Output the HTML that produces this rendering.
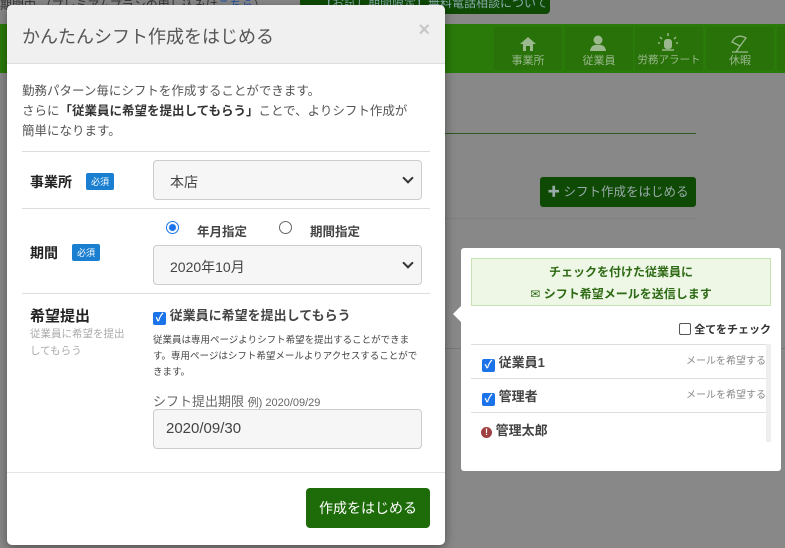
<!DOCTYPE html>
<html><head><meta charset="utf-8"><style>
*{box-sizing:border-box;margin:0;padding:0}
body{width:785px;height:548px;overflow:hidden;background:#888;font-family:"Liberation Sans","Noto Sans CJK JP",sans-serif;position:relative;color:#333}
.abs{position:absolute}
.nav{left:0;top:24px;width:785px;height:49px;background:#2a7a0a}
.ni{top:3px;height:43px;width:68px;background:#287209;color:#9bb88e;font-size:11px;text-align:center;padding-top:25px}
.modal{left:7px;top:5px;width:438px;height:540px;background:#fff;border-radius:5px;overflow:hidden;box-shadow:0 3px 10px rgba(0,0,0,.4)}
.mh{height:59px;background:#f0f0f0;border-bottom:1px solid #ddd;padding:18px 15px;font-size:18px;color:#555}
.x{right:15px;top:14px;font-size:20px;color:#c8c8c8;font-weight:bold}
.desc{left:15px;top:76px;font-size:12.5px;line-height:20px;color:#555;width:420px}
.hr{left:15px;width:408px;height:1px;background:#ddd}
.lab{font-size:14px;font-weight:bold;color:#222}
.req{display:inline-block;background:#1a7fd0;color:#fff;font-size:9px;padding:2px 5px;border-radius:2px;margin-left:14px;vertical-align:2px;font-weight:normal}
.sel{left:146px;width:269px;height:40px;border:1px solid #ccc;border-radius:4px;background:#f6f6f6;font-size:14px;padding:11px 16px;color:#444}
.chev:after{content:"";position:absolute;right:9px;top:13px;width:6px;height:6px;border-right:2px solid #333;border-bottom:2px solid #333;transform:rotate(45deg)}
.cb{display:inline-block;width:13px;height:13px;background:#1a73e8;border-radius:2px;color:#fff;font-size:11px;line-height:13px;text-align:center;vertical-align:-1px}
.btn{left:306px;top:488px;width:124px;height:40px;background:#1e6b0a;border-radius:4px;color:#fff;font-size:14px;text-align:center;line-height:40px}
.pop{left:461px;top:248px;width:320px;height:223px;background:#fff;border-radius:3px}
.pop:before{content:"";position:absolute;left:-8px;top:58px;border:8px solid transparent;border-right-color:#fff;border-left:0}
.row{left:10px;width:295px;height:1px;background:#ddd}
</style></head><body>
<div class="abs" style="left:0;top:-4px;font-size:12px;color:#333">期間中 （プレミアムプランの申し込みは<span style="color:#2250a0">こちら</span>）</div>
<div class="abs" style="left:300px;top:0;width:250px;height:14px;background:#0e4a03;border-radius:0 0 4px 4px;color:#8aa;font-size:12px;line-height:6px;padding-left:20px">【お試し期間限定】無料電話相談について</div>
<div class="abs nav"></div>
<div class="abs ni" style="left:494px;top:27px">事業所</div>
<div class="abs ni" style="left:565px;top:27px">従業員</div>
<div class="abs ni" style="left:635px;top:27px;font-size:10.5px">労務アラート</div>
<div class="abs ni" style="left:706px;top:27px">休暇</div>
<div class="abs ni" style="left:777px;top:27px"></div>
<svg class="abs" style="left:518px;top:35px" width="20" height="18"><path d="M10 2 L2 9 H5 V16 H8 V11 H12 V16 H15 V9 H18Z" fill="#9bb88e"/></svg>
<svg class="abs" style="left:588px;top:34px" width="20" height="18"><circle cx="10" cy="6" r="4.5" fill="#9bb88e"/><path d="M2 17 Q3 10 10 11 Q17 10 18 17Z" fill="#9bb88e"/></svg>
<svg class="abs" style="left:656px;top:32px" width="24" height="20"><rect x="8" y="7" width="8" height="10" rx="3" fill="#9bb88e"/><path d="M12 1V4M4 5L6 7M20 5L18 7M2 11H4M20 11H22M6 18H18" stroke="#9bb88e" stroke-width="1.5"/></svg>
<svg class="abs" style="left:729px;top:33px" width="22" height="20"><path d="M3 9 Q8 0 17 5 L11 13Z M11 13 L7 19 M3 19H19" stroke="#9bb88e" fill="none" stroke-width="1.3"/></svg>
<div class="abs" style="left:445px;top:133px;width:251px;height:1px;background:#2f5a20"></div>
<div class="abs" style="left:540px;top:177px;width:156px;height:30px;background:#0f4a05;border-radius:3px;color:#9aa;font-size:12.5px;line-height:30px;text-align:center">✚ シフト作成をはじめる</div>
<div class="abs" style="left:445px;top:218px;width:251px;border-top:1px dotted #777"></div>
<div class="abs" style="left:445px;top:348px;width:340px;height:1px;background:#777"></div>

<div class="abs modal">
 <div class="mh">かんたんシフト作成をはじめる</div>
 <div class="abs x">×</div>
 <div class="abs desc">勤務パターン毎にシフトを作成することができます。<br>さらに<b style="color:#333">「従業員に希望を提出してもらう」</b>ことで、よりシフト作成が<br>簡単になります。</div>
 <div class="abs hr" style="top:146px"></div>
 <div class="abs lab" style="left:23px;top:167px">事業所<span class="req">必須</span></div>
 <div class="abs sel chev" style="top:155px">本店</div>
 <div class="abs hr" style="top:203px"></div>
 <div class="abs" style="left:159px;top:216px;width:13px;height:13px;border-radius:50%;border:1px solid #1a73e8;background:radial-gradient(#1a73e8 3px,#fff 4px)"></div>
 <div class="abs lab" style="left:190px;top:216px;font-size:12.5px;color:#444">年月指定</div>
 <div class="abs" style="left:272px;top:216px;width:13px;height:13px;border-radius:50%;border:1px solid #666"></div>
 <div class="abs lab" style="left:303px;top:216px;font-size:12.5px;color:#444">期間指定</div>
 <div class="abs lab" style="left:23px;top:238px">期間<span class="req">必須</span></div>
 <div class="abs sel chev" style="top:240px">2020年10月</div>
 <div class="abs hr" style="top:288px"></div>
 <div class="abs lab" style="left:23px;top:300px;font-size:15px">希望提出</div>
 <div class="abs" style="left:23px;top:321px;font-size:10.5px;color:#aaa;line-height:17px">従業員に希望を提出<br>してもらう</div>
 <div class="abs" style="left:146px;top:300px;font-size:13px;font-weight:bold;color:#444"><span class="cb">✓</span> 従業員に希望を提出してもらう</div>
 <div class="abs" style="left:146px;top:328px;font-size:9.5px;line-height:16px;color:#444;width:270px">従業員は専用ページよりシフト希望を提出することができます。専用ページはシフト希望メールよりアクセスすることができます。</div>
 <div class="abs" style="left:146px;top:386px;font-size:13px;color:#666">シフト提出期限 <span style="font-size:11px">例) 2020/09/29</span></div>
 <div class="abs sel" style="top:404px;font-size:15px;padding:10px 12px">2020/09/30</div>
 <div class="abs" style="left:0;top:467px;width:438px;height:1px;background:#e5e5e5"></div>
</div>
<div class="abs btn">作成をはじめる</div>

<div class="abs pop">
 <div class="abs" style="left:10px;top:10px;width:300px;height:48px;background:#eef7e6;border:1px solid #c9e2b3;color:#2e6a14;font-size:12px;font-weight:bold;text-align:center;line-height:22px;padding-top:2px">チェックを付けた従業員に<br><span style="font-weight:normal">✉</span> シフト希望メールを送信します</div>
 <div class="abs" style="right:10px;top:73px;font-size:11px;font-weight:bold;color:#333"><span style="display:inline-block;width:12px;height:12px;border:1px solid #555;border-radius:2px;vertical-align:-2px"></span> 全てをチェック</div>
 <div class="abs" style="left:305px;top:96px;width:5px;height:98px;background:#eee"></div>
 <div class="abs row" style="top:96px"></div>
 <div class="abs" style="left:21px;top:104px;font-size:13px;font-weight:bold;color:#444"><span class="cb">✓</span> 従業員1</div>
 <div class="abs" style="left:225px;top:104px;font-size:10px;color:#888">メールを希望する</div>
 <div class="abs row" style="top:130px"></div>
 <div class="abs" style="left:21px;top:138px;font-size:13px;font-weight:bold;color:#444"><span class="cb">✓</span> 管理者</div>
 <div class="abs" style="left:225px;top:138px;font-size:10px;color:#888">メールを希望する</div>
 <div class="abs row" style="top:164px"></div>
 <div class="abs" style="left:20px;top:172px;font-size:13px;font-weight:bold;color:#444"><span style="display:inline-block;width:11px;height:11px;border-radius:50%;background:#a04040;color:#fff;font-size:9px;line-height:11px;text-align:center;vertical-align:0">!</span> 管理太郎</div>
</div>
</body></html>
